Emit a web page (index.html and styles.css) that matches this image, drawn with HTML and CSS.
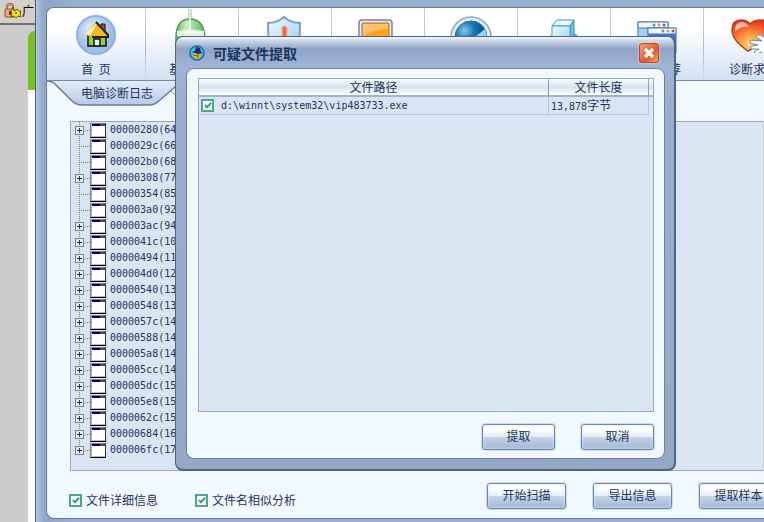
FILE: index.html
```html
<!DOCTYPE html>
<html lang="zh-CN">
<head>
<meta charset="utf-8">
<title>可疑文件提取</title>
<link rel="stylesheet" href="styles.css">
</head>
<body>
<aside class="desktop">
  <div class="strip">
    <svg width="18" height="16" viewBox="0 0 18 16"><path d="M3 7V4q0-3 3-3t3 3v3" fill="none" stroke="#8a4526" stroke-width="2"/><path d="M3 6V4q0-3 3-3t3 3" fill="none" stroke="#e8a27e"/><rect x="1" y="6" width="10" height="8" rx="1" fill="#f2a57c" stroke="#a04a22"/><rect x="5" y="8" width="2" height="4" fill="#7a2a10"/><path d="M8 6l3 2 2-2 2 2 2 0-1 3 1 3-3-1-2 2-2-2-3 1 1-3-1-3z" fill="#f4e420" stroke="#6b6408"/><circle cx="12" cy="10" r="1" fill="#554"/></svg>
    <span>广</span>
  </div>
  <div class="side"><div class="leaf"></div></div>
</aside>

<main class="window">
  <div class="panel">
    <nav class="toolbar">
      <a class="tool home" href="#">
        <svg width="44" height="44" viewBox="0 0 44 44"><circle cx="22" cy="22" r="20.500" fill="#b9d0ec" opacity=".6"/><circle cx="22" cy="22" r="19" fill="url(#orb)" stroke="#8aaad6" stroke-width="1.500"/><path d="M14 22h18v11H14z" fill="#8ed32c" stroke="#111" stroke-width="1.500"/><path d="M20 33v-7h6v7z" fill="#e9f7ff" stroke="#111" stroke-width="1.500"/><path d="M27 14v-3h4v9" fill="#d4461c" stroke="#111"/><path d="M10 21L22 9l12 13v3H19z" fill="#f5b81c"/><path d="M10 21L23 10l-6 12z" fill="#fff4c8"/><path d="M22 9l12 13v2H18" fill="none" stroke="#222" stroke-width="2"/></svg>
        <span>首&nbsp; 页</span>
      </a>
      <a class="tool basic" href="#">
        <svg width="44" height="44" viewBox="0 0 44 44"><path d="M20 0v10" stroke="#76bf72" stroke-width="3"/><path d="M6 29q0-19 14-19t15 19v15H6z" fill="url(#green)" stroke="#4c9d4b" stroke-width="1.500"/><path d="M7 22q14-3 27 0v5H7z" fill="#dff7da"/><path d="M20 0v23M7 23h27" stroke="#fff" stroke-width="1.500"/></svg>
        <span>基</span>
      </a>
      <a class="tool" href="#" aria-label="防护">
        <svg width="44" height="44" viewBox="0 0 44 44"><path d="M21 8q7 6 16 6 0 18-3 30H8Q5 32 5 14q9 0 16-6z" fill="url(#ice)" stroke="#7f9cc6" stroke-width="2"/><rect x="19" y="17" width="5" height="16" rx="2" fill="#f26a3d" stroke="#f7b39c"/></svg>
      </a>
      <a class="tool" href="#" aria-label="屏幕">
        <svg width="44" height="44" viewBox="0 0 44 44"><rect x="3" y="11" width="33" height="30" rx="3" fill="#e4eaf6" stroke="#7087b0" stroke-width="1.500"/><rect x="6" y="14" width="27" height="25" rx="1" fill="url(#orange)" stroke="#b37430"/><path d="M7 15h25v5Q18 20 7 27z" fill="#ffd28a" opacity=".7"/></svg>
      </a>
      <a class="tool" href="#" aria-label="扫描">
        <svg width="44" height="44" viewBox="0 0 44 44"><circle cx="22" cy="28" r="20" fill="#e6edf8" stroke="#8ea7cf" stroke-width="1.500"/><circle cx="22" cy="28" r="16" fill="url(#blue)" stroke="#33669a"/><path d="M22 31L36 20q3 6 1 14z" fill="#8fd8f2"/></svg>
      </a>
      <a class="tool" href="#" aria-label="组件">
        <svg width="44" height="44" viewBox="0 0 44 44"><path d="M6 28l8-4h18l6 4v16H6z" fill="#6b9ed1"/><path d="M10 17l5-6h17l-4 6z" fill="#e9fbff" stroke="#3a8fbd"/><path d="M28 17l4-6v20l-4 6z" fill="#69bfe3" stroke="#3a8fbd"/><path d="M10 17h18v20H10z" fill="url(#ice)" stroke="#4a9fcd"/></svg>
      </a>
      <a class="tool recommend" href="#">
        <svg width="44" height="44" viewBox="0 0 44 44"><g stroke="#3f78b8"><path d="M3 13h30v25H3z" fill="#a8ccf5"/><path d="M3 13h30v6H3z" fill="#f2f7ff"/><path d="M13 19h28v25H13z" fill="#3f78e8"/><path d="M13 19h28v6H13z" fill="#f2f7ff"/></g><g fill="#4bb543"><circle cx="19" cy="16" r="1.500"/><circle cx="28" cy="22" r="1.500"/></g><g fill="#ee9a35"><circle cx="24" cy="16" r="1.500"/><circle cx="33" cy="22" r="1.500"/></g><g fill="#e04030"><circle cx="29" cy="16" r="1.500"/><circle cx="38" cy="22" r="1.500"/></g></svg>
        <span>荐</span>
      </a>
      <a class="tool help" href="#">
        <svg width="44" height="44" viewBox="0 0 44 44"><path d="M20 42Q4 31 4 21 4 11 13 11q6 0 9 4 4-4 11-4 9 0 9 10-2 10-22 21z" fill="url(#heart)" stroke="#c43c18" stroke-width="1.500"/><path d="M7 19q1-6 7-6 5 1 7 5Q12 17 7 23z" fill="#fff" opacity=".6"/><path d="M44 26l-9 2-2-2-4 0-1 2 6 4-11-1-1 3 8 2-7 1v3l8 0-5 3 2 2 6-2-2 3 2 1 10-2z" fill="#fff" stroke="#7087ad"/></svg>
        <span>诊断求</span>
      </a>
    </nav>

    <div class="tabs">
      <svg class="tab-shape" width="140" height="26" viewBox="0 0 140 26"><path d="M123 9l9 9" stroke="#8096b6"/><path d="M0 0Q6 0 9 4L24 19q5 5 11 5h67q6 0 11-5L129 5q5-5 11-5z" fill="url(#tab)"/><path d="M0 0Q6 0 9 4L24 19q5 5 11 5h67q6 0 11-5L129 5q5-5 11-5" fill="none" stroke="#657da2" stroke-width="1.500"/></svg>
      <a class="tab" href="#">电脑诊断日志</a>
    </div>

    <ul class="tree">
      <li><button class="plus" aria-label="展开"></button><i class="win"></i>00000280(64</li>
      <li><i class="win"></i>0000029c(66</li>
      <li><i class="win"></i>000002b0(68</li>
      <li><button class="plus" aria-label="展开"></button><i class="win"></i>00000308(77</li>
      <li><i class="win"></i>00000354(85</li>
      <li><i class="win"></i>000003a0(92</li>
      <li><button class="plus" aria-label="展开"></button><i class="win"></i>000003ac(94</li>
      <li><button class="plus" aria-label="展开"></button><i class="win"></i>0000041c(10</li>
      <li><button class="plus" aria-label="展开"></button><i class="win"></i>00000494(11</li>
      <li><button class="plus" aria-label="展开"></button><i class="win"></i>000004d0(12</li>
      <li><button class="plus" aria-label="展开"></button><i class="win"></i>00000540(13</li>
      <li><button class="plus" aria-label="展开"></button><i class="win"></i>00000548(13</li>
      <li><button class="plus" aria-label="展开"></button><i class="win"></i>0000057c(14</li>
      <li><button class="plus" aria-label="展开"></button><i class="win"></i>00000588(14</li>
      <li><button class="plus" aria-label="展开"></button><i class="win"></i>000005a8(14</li>
      <li><button class="plus" aria-label="展开"></button><i class="win"></i>000005cc(14</li>
      <li><button class="plus" aria-label="展开"></button><i class="win"></i>000005dc(15</li>
      <li><button class="plus" aria-label="展开"></button><i class="win"></i>000005e8(15</li>
      <li><button class="plus" aria-label="展开"></button><i class="win"></i>0000062c(15</li>
      <li><button class="plus" aria-label="展开"></button><i class="win"></i>00000684(16</li>
      <li><button class="plus" aria-label="展开"></button><i class="win"></i>000006fc(17</li>
    </ul>

    <footer class="footer">
      <label class="option"><input type="checkbox" class="check" checked>文件详细信息</label>
      <label class="option"><input type="checkbox" class="check" checked>文件名相似分析</label>
      <div class="actions">
        <button class="btn wide">开始扫描</button>
        <button class="btn wide">导出信息</button>
        <button class="btn wide">提取样本</button>
      </div>
    </footer>
  </div>
</main>

<section class="dialog" role="dialog" aria-labelledby="dialog-title">
  <header class="titlebar">
    <svg width="16" height="16" viewBox="0 0 16 16"><circle cx="8" cy="8" r="7" fill="#38c0ee" stroke="#1b6d97" stroke-width="1.500"/><path d="M5 8h7l-1 5-4 1-3-3z" fill="#f0b62a"/><path d="M3 7l3-1 1-4 4 1 1 4 2 1-5 1z" fill="#20286e"/><path d="M5 10l3 1M9 9v4" stroke="#8a3d0c"/></svg>
    <h1 id="dialog-title">可疑文件提取</h1>
    <button class="close" aria-label="关闭"><svg width="18" height="18" viewBox="0 0 18 18"><path d="M5 5l8 8M13 5l-8 8" stroke="#c8603c" stroke-width="5"/><path d="M5 5l8 8M13 5l-8 8" stroke="#fff" stroke-width="3.500"/></svg></button>
  </header>
  <div class="content">
    <div class="list">
      <table>
        <thead><tr><th>文件路径</th><th class="size">文件长度</th><th class="end"></th></tr></thead>
        <tbody><tr><td><label class="file"><input type="checkbox" class="check" checked>d:\winnt\system32\vip483733.exe</label></td><td><span class="mono">13,878</span>字节</td><td class="blank"></td></tr></tbody>
      </table>
    </div>
    <div class="buttons">
      <button class="btn">提取</button>
      <button class="btn">取消</button>
    </div>
  </div>
</section>

<svg class="defs" width="0" height="0">
  <defs>
    <radialGradient id="orb" cx=".4" cy=".35"><stop offset="0" stop-color="#f4faff"/><stop offset=".5" stop-color="#bcd6f4"/><stop offset="1" stop-color="#9dbfe8"/></radialGradient>
    <linearGradient id="green" x2="1"><stop offset="0" stop-color="#5cb765"/><stop offset=".35" stop-color="#c9f0be"/><stop offset="1" stop-color="#5db865"/></linearGradient>
    <linearGradient id="ice" x2="1" y2="1"><stop offset="0" stop-color="#f3fbff"/><stop offset="1" stop-color="#92cdf2"/></linearGradient>
    <linearGradient id="orange" x2="1" y2="1"><stop offset="0" stop-color="#ff9c2e"/><stop offset="1" stop-color="#ffa800"/></linearGradient>
    <radialGradient id="blue" cx=".3" cy=".3"><stop offset="0" stop-color="#8cc8ea"/><stop offset=".6" stop-color="#1679b8"/><stop offset="1" stop-color="#0c5b98"/></radialGradient>
    <radialGradient id="heart" cx=".5" cy=".8" r=".8"><stop offset="0" stop-color="#ffe36a"/><stop offset=".5" stop-color="#ff8a3a"/><stop offset="1" stop-color="#e8321c"/></radialGradient>
    <linearGradient id="tab" x2="0" y2="1"><stop offset="0" stop-color="#e3ecf8"/><stop offset="1" stop-color="#b7cae5"/></linearGradient>
  </defs>
</svg>
</body>
</html>
```
FILE: styles.css
```css
* {
  box-sizing: border-box;
}

body {
  margin: 0;
  display: flex;
  min-height: 100vh;
  position: relative;
  overflow: hidden;
  background: #ccc;
  color: #1c355e;
  font: 12px/16px "Noto Sans CJK SC", "Liberation Sans", sans-serif;
}

a {
  color: inherit;
  text-decoration: none;
}

.defs {
  position: absolute;
}

.desktop {
  flex: 0 0 35px;
  display: flex;
  flex-direction: column;
  overflow: hidden;
}

.strip {
  display: flex;
  align-items: flex-start;
  height: 25px;
  padding: 3px 0 0 4px;
  background: #d4d0c8;
  border-bottom: 2px solid #707070;
  color: #000;
}

.strip svg {
  flex: none;
}

.side {
  flex: 1;
  margin-left: 28px;
  margin-top: 6px;
  background: linear-gradient(#ccc 8px, #fff 8px);
}

.leaf {
  height: 59px;
  background: #77c120;
  border-top-left-radius: 8px;
}

.window {
  flex: 1;
  min-width: 0;
  display: flex;
  padding: 7px 0 3px 10px;
  border-left: 1px solid #4c607f;
  background: linear-gradient(90deg, #b4c6df, #9bb0d0 5px, #8fa5c7 10px, #9bb0d0 40px);
}

.panel {
  flex: 1;
  min-width: 0;
  display: flex;
  flex-direction: column;
  border: 1px solid #627b9f;
  border-right: 0;
  border-radius: 8px 0 0 8px;
  background: #f1f8ff;
  overflow: hidden;
}

.toolbar {
  display: flex;
  height: 73px;
  overflow: hidden;
  border-bottom: 1px solid #7088aa;
  background: linear-gradient(#fff 30%, #e8f0fa 65%, #d3e0f2);
}

.tool {
  flex: 0 0 93px;
  display: flex;
  flex-direction: column;
  align-items: center;
  padding-top: 1px;
  border-right: 1px solid;
  border-image: linear-gradient(#c5d2e6, #a8bad6 60%, #d3e0f2) 1;
}

.tool svg {
  flex: none;
  margin-bottom: 8px;
}

.tool span {
  white-space: nowrap;
}

.home {
  flex-basis: 99px;
  padding-top: 5px;
}

.home svg {
  margin-bottom: 4px;
}

.basic span {
  align-self: flex-start;
  padding-left: 23px;
}

.recommend span {
  align-self: flex-end;
  padding-right: 22px;
}

.help span {
  align-self: flex-start;
  padding-left: 25px;
}

.tabs {
  display: grid;
  height: 40px;
}

.tab-shape,
.tab {
  grid-area: 1 / 1;
}

.tab {
  padding: 4px 0 0 34px;
}

.tree {
  flex: 1;
  margin: 0 0 0 23px;
  padding: 0 0 12px;
  list-style: none;
  border: 1px solid #95a9c6;
  border-right-color: #d4d4d4;
  background: #dae5f4;
}

.tree li {
  display: flex;
  align-items: center;
  height: 16px;
  padding-left: 4px;
  background:
    repeating-linear-gradient(#808080 0 1px, transparent 1px 2px) 8px 0 / 1px 16px no-repeat,
    repeating-linear-gradient(90deg, #808080 0 1px, transparent 1px 2px) 8px 8px / 11px 1px no-repeat;
}

.tree li:last-child {
  background-size: 1px 8px, 11px 1px;
}

.plus {
  width: 9px;
  height: 9px;
  padding: 0;
  margin-right: 6px;
  border: 1px solid #808080;
  background:
    linear-gradient(#1c355e, #1c355e) center / 5px 1px no-repeat,
    linear-gradient(#1c355e, #1c355e) center / 1px 5px no-repeat,
    #e6eefa;
}

.win {
  flex: none;
  width: 16px;
  height: 15px;
  margin: 0 4px 0 15px;
  border: 1px solid #808080;
  border-right-color: #333;
  border-bottom: 1px solid #000;
  background: linear-gradient(90deg, #000080 9px, #445 9px) top / 100% 2px no-repeat, #fff;
  box-shadow: inset 0 -1px #bbb, inset 1px 0 #bbb;
}

.plus + .win {
  margin-left: 0;
}

.footer {
  display: flex;
  align-items: center;
  height: 47px;
  padding: 3px 0 0 22px;
}

.option {
  display: flex;
  flex: none;
  align-items: center;
  gap: 4px;
  margin-top: 8px;
  margin-right: 37px;
}

.check {
  appearance: none;
  flex: none;
  display: grid;
  place-items: center;
  width: 13px;
  height: 13px;
  margin: 0;
  border: 2px solid #4aaa80;
  background: #fff;
}

.check:checked::after {
  content: "";
  width: 2px;
  height: 5px;
  margin-bottom: 2px;
  border: solid #3ba374;
  border-width: 0 2px 2px 0;
  transform: rotate(45deg);
}

.actions {
  display: flex;
  gap: 27px;
  margin: 0 -14px 0 auto;
}

.btn {
  width: 73px;
  height: 26px;
  padding: 0 0 2px;
  border: 1px solid #6688b8;
  border-radius: 3px;
  background: linear-gradient(#fff 20%, #e6ecf6 48%, #c8d5e8 50%, #a3b6d4);
  box-shadow: 0 0 0 1px #cfddee, inset 0 0 3px #dfeafa;
  color: inherit;
  font: inherit;
}

.wide {
  width: 79px;
}

.dialog {
  position: absolute;
  left: 175px;
  top: 36px;
  width: 501px;
  padding: 0 9px 10px 10px;
  border: 1px solid #4c6488;
  border-bottom-width: 2px;
  border-right-width: 2px;
  border-radius: 8px;
  background: linear-gradient(#f4f7fc, #c9d5e6 4px, #8fa4c6 12px, #a0b5d6 30px, #9aaecd 60px, #94a8c6);
}

.titlebar {
  display: flex;
  align-items: center;
  height: 31px;
  padding: 0 6px 0 3px;
}

.titlebar h1 {
  flex: 1;
  margin: 0 0 0 8px;
  font-size: 14px;
}

.close {
  width: 20px;
  height: 20px;
  padding: 0;
  border: 1px solid #b8452b;
  border-radius: 3px;
  background: linear-gradient(135deg, #f7a080, #e8582c 60%, #f9b040);
  box-shadow: 0 0 2px #fff;
}

.close svg {
  display: block;
}

.content {
  padding: 9px 10px 8px 11px;
  border: 1px solid #6a82a6;
  border-radius: 8px;
  background: #f1f8ff;
}

.list {
  height: 334px;
  border: 1px solid #95a9c6;
  background: #dae5f4;
}

table {
  width: 100%;
  table-layout: fixed;
  border-collapse: separate;
  border-spacing: 0;
}

th {
  height: 18px;
  padding: 0;
  border-right: 1px solid #8aa0c2;
  border-bottom: 2px solid #9fb2ce;
  background: linear-gradient(#f8fbff, #d6e3ef 50%, #fff);
  font-weight: normal;
  line-height: 14px;
}

.size {
  width: 100px;
}

.end {
  width: 4px;
  border-right: 0;
}

td {
  height: 18px;
  padding: 0 0 0 2px;
  border: solid #b4c6de;
  border-width: 0 1px 1px 0;
  line-height: 14px;
}

.blank {
  padding: 0;
  border: 0;
}

.file {
  display: flex;
  align-items: center;
  gap: 7px;
}

.tree,
.file,
.mono {
  font-family: "DejaVu Sans Mono", monospace;
  font-size: 10px;
}

.buttons {
  display: flex;
  justify-content: flex-end;
  gap: 26px;
  padding-top: 12px;
}
```
